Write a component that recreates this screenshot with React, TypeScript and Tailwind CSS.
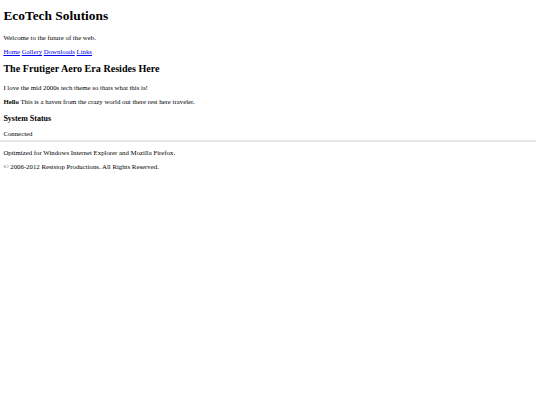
export default function App() {
  return (
    <div className="min-h-[405px] bg-white font-['Liberation_Serif',serif] text-[6.8px] leading-[normal] text-black">
      <div className="px-[3.4px] pt-[0.1px]">
        <h1 className="mt-[7.7px] mb-[10.5px] text-[13.4px] font-bold">EcoTech Solutions</h1>
        <p className="my-[7.2px]">Welcome to the future of the web.</p>
        <p className="my-[7.2px]">
          <a href="#" className="text-[#0000ee] underline">Home</a>{' '}
          <a href="#" className="text-[#0000ee] underline">Gallery</a>{' '}
          <a href="#" className="text-[#0000ee] underline">Downloads</a>{' '}
          <a href="#" className="text-[#0000ee] underline">Links</a>
        </p>
        <h2 className="mt-[7.9px] mb-[9.8px] text-[10.1px] font-bold">The Frutiger Aero Era Resides Here</h2>
        <p className="my-[7.2px]">I love the mid 2000s tech theme so thats what this is!</p>
        <p className="my-[7.2px]">
          <strong>Hello</strong> This is a haven from the crazy world out there rest here traveler.
        </p>
        <h3 className="mt-[8.5px] mb-[7.5px] text-[8px] font-bold">System Status</h3>
        <p className="mt-[7.2px] mb-[3px]">Connected</p>
      </div>
      <footer className="mr-[4px] border-t-[2px] border-[#e6e6e6]">
        <div className="px-[3.4px]">
          <p className="mt-[6.7px] mb-[7.2px]">Optimized for Windows Internet Explorer and Mozilla Firefox.</p>
          <p className="my-[7.2px]">© 2006-2012 Reststop Productions. All Rights Reserved.</p>
        </div>
      </footer>
    </div>
  );
}
